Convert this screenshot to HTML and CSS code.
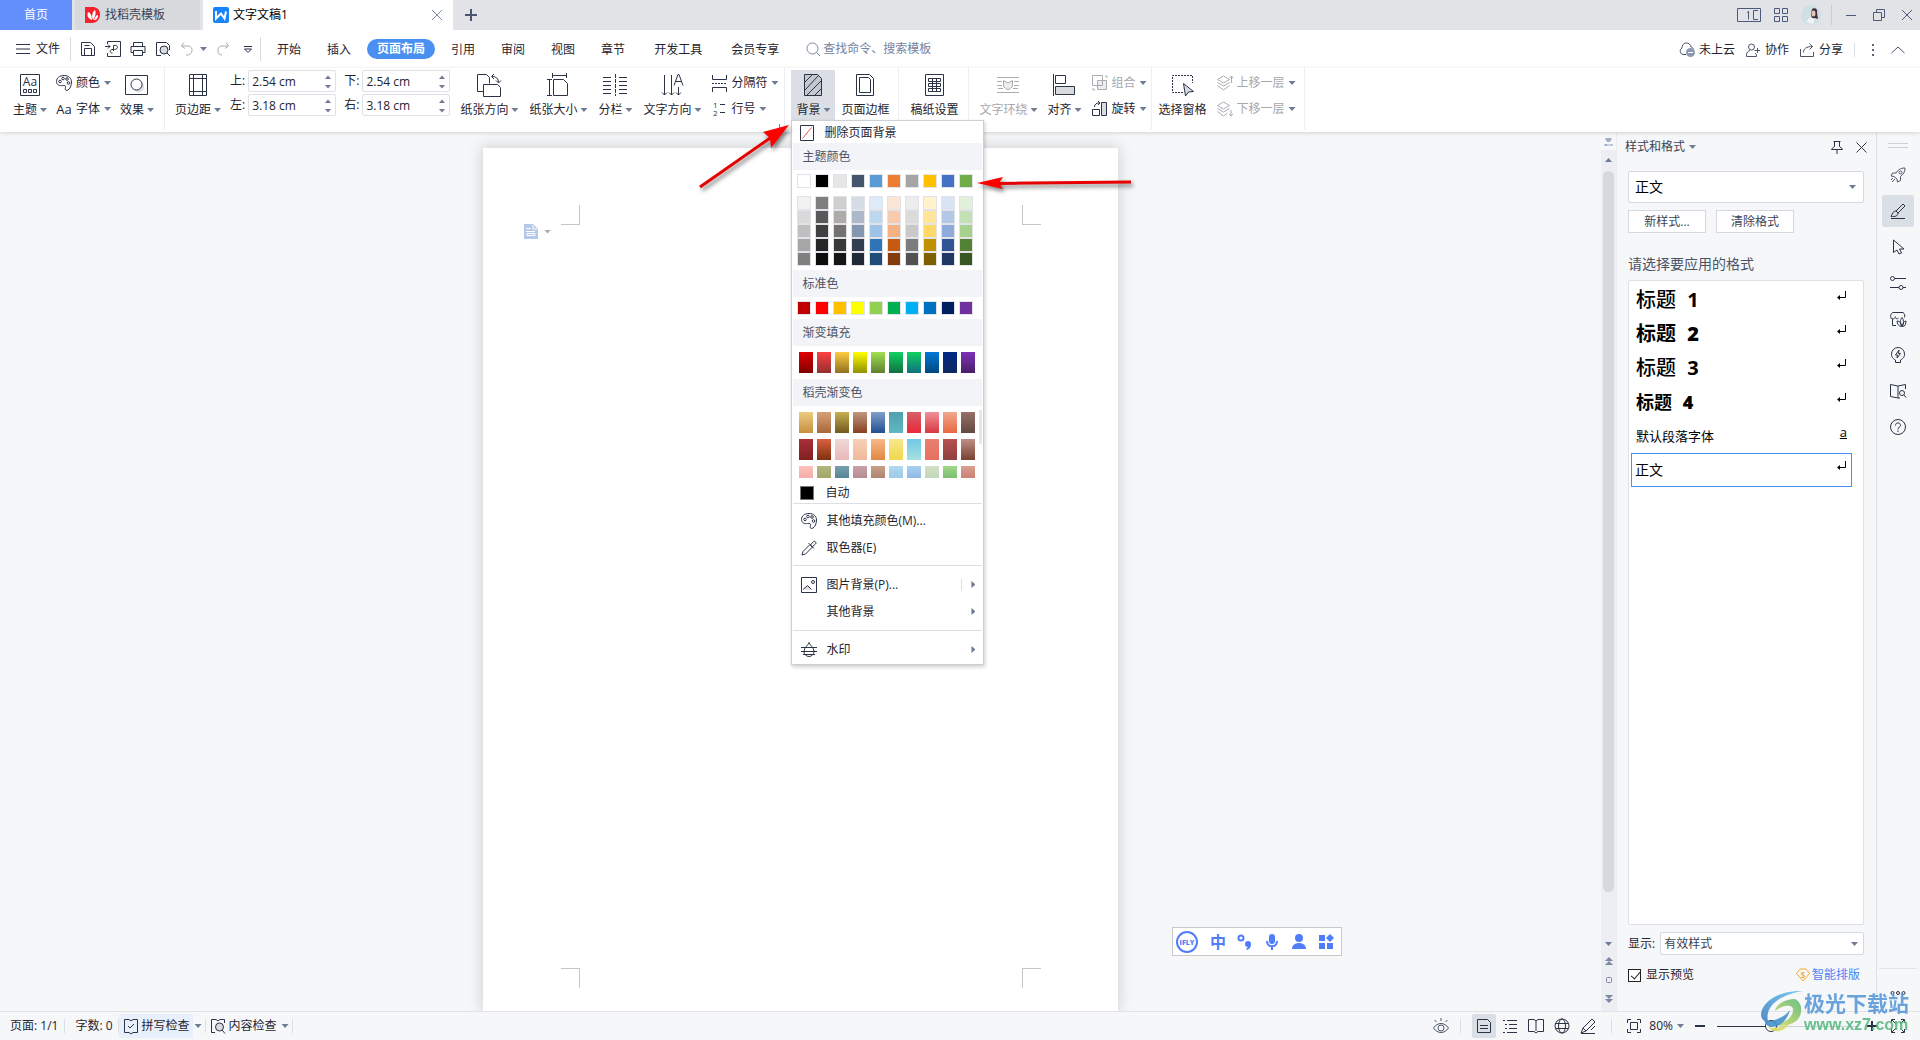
FILE: index.html
```html
<!DOCTYPE html>
<html lang="zh-CN">
<head>
<meta charset="utf-8">
<title>文字文稿1</title>
<link rel="stylesheet" href="styles.css">
</head>
<body>
<header class="titlebar">
  <button class="doc-tab doc-tab--home">首页</button>
  <button class="doc-tab doc-tab--store">
    <svg width="16" height="16" viewBox="0 0 16 16"><path d="M0 0h9a7 7 0 0 1 6 8 8 8 0 0 1-8 8H0z" fill="#f5222d"/><path d="M7 13C2 11 2 8 3 5c3 1 4 4 4 8zM8 13c-2-4 0-9 2-10 1 2 1 6-2 10zM9 13c1-3 2-5 4-5 0 3-1 5-4 5z" fill="#fff"/></svg>
    找稻壳模板</button>
  <div class="doc-tab doc-tab--current">
    <svg width="16" height="16" viewBox="0 0 16 16"><rect width="16" height="16" rx="2" fill="#1684fc"/><path d="M3 4v7.500L8 6.500l3.500 5L13 4.500" fill="none" stroke="#fff" stroke-width="2"/></svg>
    <span>文字文稿1</span>
    <button class="icon-btn doc-tab__close" aria-label="关闭标签"><svg width="12" height="12" viewBox="0 0 12 12"><path d="M1 1l10 10M11 1L1 11" stroke="#7c88a3" fill="none"/></svg></button>
  </div>
  <button class="icon-btn new-tab" aria-label="新建"><svg width="12" height="12" viewBox="0 0 12 12"><path d="M6 0v12M0 6h12" stroke="#4a5570" stroke-width="2"/></svg></button>
  <div class="window-tools">
    <button class="icon-btn" aria-label="窗口"><svg width="24" height="14" viewBox="0 0 24 14" class="ln ln--blue"><path d="M.5.500h23v13H.5zM21 2.500h-4.500v9H21M10 4.500l1.500-1v8"/></svg></button>
    <button class="icon-btn" aria-label="应用"><svg width="14" height="14" viewBox="0 0 14 14" class="ln ln--blue"><path d="M.5.500h5v5h-5zM8.500.500h5v5h-5zM.5 8.500h5v5h-5zM8.500 8.500h5v5h-5z"/></svg></button>
    <button class="icon-btn" aria-label="账户"><svg width="20" height="20" viewBox="0 0 20 20"><circle cx="10" cy="10" r="10" fill="#cfdfe4"/><path d="M11 4c3-2 6 0 5 4l1 6-3-1-3 1-1-5z" fill="#3b2f38"/><ellipse cx="12.500" cy="8.500" rx="2" ry="3" fill="#e9c4b6"/><path d="M5 17l4-5 5 2-2 5z" fill="#eef4f6"/></svg></button>
    <span class="vline vline--tall"></span>
    <button class="icon-btn" aria-label="最小化"><svg width="12" height="12" viewBox="0 0 12 12" class="ln ln--blue"><path d="M1 6.500h10"/></svg></button>
    <button class="icon-btn" aria-label="还原"><svg width="12" height="12" viewBox="0 0 12 12" class="ln ln--blue"><path d="M.5 3.500h8v8h-8zM3.500 3V.500h8v8H9"/></svg></button>
    <button class="icon-btn" aria-label="关闭"><svg width="12" height="12" viewBox="0 0 12 12" class="ln ln--blue"><path d="M1 1l10 10M11 1L1 11"/></svg></button>
  </div>
</header>

<nav class="menubar">
  <button class="file-btn"><svg width="14" height="10" viewBox="0 0 14 10" class="ln"><path d="M0 .500h14M0 5h14M0 9.500h14"/></svg>文件</button>
  <div class="quick">
    <button class="icon-btn" aria-label="保存"><svg width="16" height="16" viewBox="0 0 16 16" class="ln"><path d="M1.500 1.500h9l4 4v9h-13v-13zM4.500 14V7.500h7V14M4.500 4.500h5"/></svg></button>
    <button class="icon-btn" aria-label="输出为PDF"><svg width="16" height="16" viewBox="0 0 16 16" class="ln"><path d="M2.500 3V.500h13v15h-13V12M0 5.500h5M3 3.500l2 2-2 2M8.500 10V4.500c4-1.500 6 3.500 1 4H7c-3 .5-2 4 .5 3.500"/></svg></button>
    <button class="icon-btn" aria-label="打印"><svg width="16" height="16" viewBox="0 0 16 16" class="ln"><path d="M3.500 5.500v-4h9v4M3.500 11.500h-2.500v-6h14v6h-2.500M3.500 9.500h9v5h-9z"/></svg></button>
    <button class="icon-btn" aria-label="打印预览"><svg width="16" height="16" viewBox="0 0 16 16" class="ln"><path d="M6 14.500H1.500v-13h10l3 3V9"/><circle cx="9" cy="9" r="4" fill="#d9dbe0"/><path d="M12 12l3 3"/></svg></button>
    <span class="pair"><button class="icon-btn" aria-label="撤销"><svg width="16" height="16" viewBox="0 0 16 16" class="ln ln--gray"><path d="M4 1.500L1.500 5 5 7.500M2 5h6a4 4 0 0 1 4 4.500 5 5 0 0 1-6 4.500"/></svg></button><i class="caret"></i></span>
    <button class="icon-btn" aria-label="恢复"><svg width="16" height="16" viewBox="0 0 16 16" class="ln ln--gray"><path d="M11 1.500L13.500 5 10 7.500M13 5H7a4 4 0 0 0-4 4.500 4 4 0 0 0 4 4.500"/></svg></button>
    <button class="icon-btn" aria-label="自定义"><svg width="16" height="16" viewBox="0 0 16 16" class="ln"><path d="M4 5.500h8M4.500 8l3.500 3.500L11.500 8z"/></svg></button>
  </div>
  <div class="tabs">
    <button class="tab">开始</button><button class="tab">插入</button><button class="tab tab--active">页面布局</button><button class="tab">引用</button><button class="tab">审阅</button><button class="tab">视图</button><button class="tab">章节</button><button class="tab tab--spaced">开发工具</button><button class="tab tab--spaced">会员专享</button>
  </div>
  <label class="search"><svg width="15" height="15" viewBox="0 0 15 15" class="ln ln--soft"><circle cx="6.500" cy="6.500" r="5.500"/><path d="M10.500 10.500l3.500 3.500"/></svg><input type="text" placeholder="查找命令、搜索模板" aria-label="查找命令"></label>
  <div class="share">
    <button class="share__btn"><svg width="16" height="16" viewBox="0 0 16 16" class="ln ln--mid"><path d="M7 12.500H4A3.500 3.500 0 0 1 3 6a4.500 4.500 0 0 1 9-1c1 0 2 1 2.500 2"/><circle cx="11.500" cy="10.500" r="4.500" fill="#8d99b3" stroke="none"/><path d="M9 10.500h5" stroke="#fff"/></svg>未上云</button>
    <button class="share__btn share__btn--wide"><svg width="14" height="14" viewBox="0 0 14 14" class="ln ln--mid"><circle cx="5.500" cy="4" r="3"/><path d="M4 7.500C2 8 .500 9.500.500 12v1.500h10V12L9 10M8.500 7.500H14M11.500 5v5"/></svg>协作</button>
    <button class="share__btn share__btn--wide"><svg width="14" height="14" viewBox="0 0 14 14" class="ln ln--mid"><path d="M.500 6v7.500h13V9M3.500 9.500c0-4 3-6 9-6M9.500.500l3 3-3 3"/></svg>分享</button>
    <span class="vline"></span>
    <button class="icon-btn" aria-label="更多"><svg width="4" height="14" viewBox="0 0 4 14" fill="#5d6575"><path d="M1 1h2v2H1zM1 6h2v2H1zM1 11h2v2H1z"/></svg></button>
    <button class="icon-btn" aria-label="折叠功能区"><svg width="14" height="14" viewBox="0 0 14 14" class="ln ln--mid"><path d="M.500 10L7 4l6.500 6"/></svg></button>
  </div>
</nav>

<section class="ribbon">
  <div class="group group--theme">
    <button class="big"><span class="big__icon"><svg width="20" height="22" viewBox="0 0 20 22" class="ln"><path d="M.500.500h19v21H.500zM3.500 15.500h3v3h-3zM8.500 15.500h3v3h-3zM13.500 15.500h3v3h-3z"/><text x="10" y="12" text-anchor="middle" class="aa">Aa</text></svg></span><span class="lbl">主题<i class="caret"></i></span></button>
    <div class="stack">
      <button class="small"><svg width="16" height="16" viewBox="0 0 16 16" class="ln"><path d="M8 .500c5 0 7.500 3 7.500 6.500S14 14 12 15c-3 1.500-3-1-2.500-2.500.5-2-1-2.500-3-2-3 .500-6-.500-6-4C.500 3 3.500.500 8 .500z"/><circle cx="4" cy="6.500" r="1.300"/><circle cx="7" cy="3.500" r="1.300"/><circle cx="11" cy="4" r="1.300"/><circle cx="12.500" cy="8" r="1.300"/></svg>颜色<i class="caret"></i></button>
      <button class="small"><span class="aa-label">Aa</span>字体<i class="caret"></i></button>
    </div>
    <button class="big"><span class="big__icon"><svg width="23" height="20" viewBox="0 0 23 20" class="ln"><path d="M.500.500h22v19H.500z"/><circle cx="13.500" cy="11.500" r="5.500" fill="#d9dbe0" stroke="none"/><circle cx="11.500" cy="9.500" r="5.500" fill="#fff"/></svg></span><span class="lbl">效果<i class="caret"></i></span></button>
  </div>
  <div class="group group--margins">
    <button class="big"><span class="big__icon"><svg width="18" height="22" viewBox="0 0 18 22" class="ln"><path d="M.500.500h17v21H.500zM4.500 0v22M13.500 0v22M0 4.500h18M0 17.500h18"/></svg></span><span class="lbl">页边距<i class="caret"></i></span></button>
    <div class="fields">
      <label class="field">上:<span class="spin"><input type="text" value="2.54 cm"><svg width="6" height="14" viewBox="0 0 6 14"><path d="M0 4l3-3.500L6 4zM0 10l3 3.500L6 10z" fill="#6f7b95"/></svg></span></label>
      <label class="field">下:<span class="spin"><input type="text" value="2.54 cm"><svg width="6" height="14" viewBox="0 0 6 14"><path d="M0 4l3-3.500L6 4zM0 10l3 3.500L6 10z" fill="#6f7b95"/></svg></span></label>
      <label class="field">左:<span class="spin"><input type="text" value="3.18 cm"><svg width="6" height="14" viewBox="0 0 6 14"><path d="M0 4l3-3.500L6 4zM0 10l3 3.500L6 10z" fill="#6f7b95"/></svg></span></label>
      <label class="field">右:<span class="spin"><input type="text" value="3.18 cm"><svg width="6" height="14" viewBox="0 0 6 14"><path d="M0 4l3-3.500L6 4zM0 10l3 3.500L6 10z" fill="#6f7b95"/></svg></span></label>
    </div>
  </div>
  <div class="group group--paper">
    <button class="big"><span class="big__icon"><svg width="26" height="24" viewBox="0 0 26 24" class="ln"><path d="M8 18.500H1.500v-17h9l3 3v6M7.500 11.500h14l3 3v9h-17zM16 3.500c4 0 6.500 2 6.500 6M18 1l-2.500 2.500L18 6M20 7.500l2.500 2.500L25 7.500"/></svg></span><span class="lbl">纸张方向<i class="caret"></i></span></button>
    <button class="big"><span class="big__icon"><svg width="22" height="24" viewBox="0 0 22 24" class="ln"><path d="M5 2.500h15M5.500 0v5M19.500 0v5M2.500 6v17M0 6.500h5M0 22.500h5M6.500 6.500h10l4 4v12h-14z"/></svg></span><span class="lbl">纸张大小<i class="caret"></i></span></button>
    <button class="big"><span class="big__icon"><svg width="24" height="24" viewBox="0 0 24 24" class="ln"><path d="M0 4.500h8M0 8.500h8M0 12.500h8M0 16.500h8M0 20.500h8M16 4.500h8M16 8.500h8M16 12.500h8M16 16.500h8M16 20.500h8"/><path d="M12.500 1v22" stroke-dasharray="4 1"/></svg></span><span class="lbl">分栏<i class="caret"></i></span></button>
    <button class="big"><span class="big__icon"><svg width="22" height="24" viewBox="0 0 22 24" class="ln"><path d="M3.500 2v20M1 19.500L3.500 22 6 19.500M10.500 2v20M8 19.500l2.500 2.500 2.500-2.500M17.500 14v8M15 19.500l2.500 2.500 2.500-2.500M13 12.500l4-11h1l4 11M14.500 8.500h6"/></svg></span><span class="lbl">文字方向<i class="caret"></i></span></button>
    <div class="stack">
      <button class="small"><svg width="15" height="17" viewBox="0 0 15 17" class="ln"><path d="M.500 0v4.500h14V0M.500 17v-4.500h14V17"/><path d="M0 8.500h15" stroke-dasharray="2 1"/></svg>分隔符<i class="caret"></i></button>
      <button class="small"><svg width="15" height="18" viewBox="0 0 15 18" class="ln"><text x="1" y="8" class="num">1</text><text x="1" y="16" class="num">2</text><path d="M8 4.500h5M8 12.500h5"/></svg>行号<i class="caret"></i></button>
    </div>
    <svg class="launcher ln ln--soft" width="6" height="6" viewBox="0 0 6 6"><path d="M5.500 0v5.500H0"/></svg>
  </div>
  <div class="group group--page">
    <div class="anchor">
      <button class="big big--pressed"><span class="big__icon"><svg width="18" height="22" viewBox="0 0 18 22" class="ln"><path d="M.500.500h13l4 4v17H.500z" fill="#c3c8d1"/><path d="M1 8l7-7M1 16L14.500 1.500M3 21L17 7M11 21l6-6"/></svg></span><span class="lbl">背景<i class="caret"></i></span></button>
      <div class="menu">
        <button class="menu__top"><svg width="14" height="16" viewBox="0 0 14 16" class="ln"><path d="M.500.500h13v15H.500z"/><path d="M2.500 13.500l9-11" stroke="#e0554c"/></svg>删除页面背景</button>
        <h3 class="menu__head">主题颜色</h3>
        <div class="swatches" data-set="theme"></div>
        <div class="swatches swatches--tints" data-set="tints"></div>
        <h3 class="menu__head">标准色</h3>
        <div class="swatches swatches--std" data-set="standard"></div>
        <h3 class="menu__head">渐变填充</h3>
        <div class="swatches swatches--grad" data-set="gradient"></div>
        <h3 class="menu__head">稻壳渐变色</h3>
        <div class="swatches swatches--grad swatches--docer" data-set="docer"></div>
        <button class="menu__auto"><span class="menu__black"></span>自动</button>
        <div class="menu__part">
          <button class="menu__item"><svg width="16" height="16" viewBox="0 0 16 16" class="ln"><path d="M8 .500c5 0 7.500 3 7.500 6.500S14 14 12 15c-3 1.500-3-1-2.500-2.500.5-2-1-2.500-3-2-3 .500-6-.500-6-4C.500 3 3.500.500 8 .500z"/><circle cx="4" cy="6.500" r="1.300"/><circle cx="7" cy="3.500" r="1.300"/><circle cx="11" cy="4" r="1.300"/><circle cx="12.500" cy="8" r="1.300"/></svg>其他填充颜色(M)...</button>
          <button class="menu__item"><svg width="16" height="16" viewBox="0 0 16 16" class="ln"><path d="M9 4.500L2 11.500 1 15l3.500-1 7-7M7.500 3l5.500 5.500M9.500 5l3-3.500c1-1 3.500 1 2 2.500L11 7z"/></svg>取色器(E)</button>
        </div>
        <div class="menu__part">
          <button class="menu__item"><svg width="16" height="16" viewBox="0 0 16 16" class="ln"><path d="M.500.500h15v15H.500z"/><path d="M2 12.500l4.500-4 4 4z" fill="#d9dbe0" stroke="none"/><path d="M2 12.500l4.500-4 4 4"/><circle cx="12" cy="5" r="1.500"/></svg>图片背景(P)...<span class="menu__split"></span><i class="arrow"></i></button>
          <button class="menu__item"><svg width="16" height="16" viewBox="0 0 16 16"></svg>其他背景<i class="arrow menu__push"></i></button>
        </div>
        <div class="menu__part menu__part--last">
          <button class="menu__item"><svg width="16" height="16" viewBox="0 0 16 16" class="ln"><path d="M8 .500c1 3 5 5 5 9a5 5 0 0 1-10 0c0-4 4-6 5-9zM0 5.500h16M0 9.500h16M2 12.500h12"/></svg>水印<i class="arrow menu__push"></i></button>
        </div>
      </div>
      <svg class="pointer pointer--button" width="100" height="74" viewBox="0 0 100 74"><path d="M3 66L76 15" stroke="#e60000" stroke-width="3"/><path d="M92 4L66 11l7 6 1 10z" fill="#f00"/></svg>
      <svg class="pointer pointer--swatch" width="162" height="24" viewBox="0 0 162 24"><path d="M20 12.500L156 11" stroke="#e60000" stroke-width="3"/><path d="M2 12L28 6l-4 6 4 6z" fill="#f00"/></svg>
    </div>
    <button class="big"><span class="big__icon"><svg width="18" height="22" viewBox="0 0 18 22" class="ln"><path d="M.500.500h13l4 4v17H.500zM3.500 3.500h9l2 2v13h-11z"/></svg></span><span class="lbl">页面边框</span></button>
  </div>
  <div class="group">
    <button class="big"><span class="big__icon"><svg width="19" height="22" viewBox="0 0 19 22" class="ln"><path d="M.500.500h18v21H.500zM3.500 4.500h12v3h-12zM3.500 9.500h12v3h-12zM3.500 14.500h12v3h-12zM7.500 4.500v13M11.500 4.500v13"/></svg></span><span class="lbl">稿纸设置</span></button>
  </div>
  <div class="group group--arrange">
    <button class="big" disabled><span class="big__icon"><svg width="22" height="20" viewBox="0 0 22 20" class="ln ln--gray"><path d="M0 2.500h22M0 17.500h22M0 6.500h5M0 10.500h5M1 13.500h5M17 6.500h5M17 10.500h5M16 13.500h5"/><path d="M6.500 5.500L11 8l4.500-2.500v6L11 15l-4.500-3.500z" fill="#eee"/></svg></span><span class="lbl">文字环绕<i class="caret"></i></span></button>
    <button class="big"><span class="big__icon"><svg width="22" height="22" viewBox="0 0 22 22" class="ln"><path d="M.500 0v22M2.500 1.500h10v8h-10z"/><path d="M2.500 12.500h19v8h-19z" fill="#d9dbe0"/></svg></span><span class="lbl">对齐<i class="caret"></i></span></button>
    <div class="stack">
      <button class="small" disabled><svg width="16" height="16" viewBox="0 0 16 16" class="ln ln--gray"><path d="M.500.500h10v10H.500z"/><path d="M5.500 5.500h9v9h-9z" fill="#eee"/><path d="M10.500 5v5.500H5M1 15h2M1 13v2M13 1h2v2"/></svg>组合<i class="caret"></i></button>
      <button class="small"><svg width="16" height="16" viewBox="0 0 16 16" class="ln"><path d="M.500 8.500h7v6h-7zM2.500 6c0-3 2-4 5-4M6 0l2 2-2 2"/><path d="M9.500 1.500h5v13h-5z" fill="#d9dbe0"/></svg>旋转<i class="caret"></i></button>
    </div>
  </div>
  <div class="group group--select">
    <button class="big"><span class="big__icon"><svg width="24" height="24" viewBox="0 0 24 24" class="ln"><path d="M12 19.500H1.500v-17h20V10" stroke-dasharray="2 1"/><path d="M12.500 10.500l10 8-5 .500-3 4z" fill="#d9dbe0"/></svg></span><span class="lbl">选择窗格</span></button>
    <div class="stack">
      <button class="small" disabled><svg width="16" height="16" viewBox="0 0 16 16" class="ln ln--gray"><path d="M6.500 1l6 3.500-6 3.500-6-3.500z"/><path d="M.500 7.500l6 3.500 6-3.500M.500 10.500L6.500 15l6-4.500M14.500 8V1M12.500 3l2-2 1.500 2" /></svg>上移一层<i class="caret"></i></button>
      <button class="small" disabled><svg width="16" height="16" viewBox="0 0 16 16" class="ln ln--gray"><path d="M6.500 1l6 3.500-6 3.500-6-3.500z"/><path d="M.500 7.500l6 3.500 6-3.500M.500 10.500L6.500 15l4-3M14 9v6M12 13l2 2 2-2"/></svg>下移一层<i class="caret"></i></button>
    </div>
  </div>
</section>

<main class="work">
  <div class="canvas">
    <article class="page">
      <i class="mark mark--tl"></i><i class="mark mark--tr"></i><i class="mark mark--bl"></i><i class="mark mark--br"></i>
      <button class="page__tool" aria-label="粘贴选项"><svg width="14" height="15" viewBox="0 0 14 15"><path d="M0 0h9l5 5v10H0z" fill="#b3c8ea"/><path d="M2 4.500h5M2 7.500h9M3 9.500h8v2H3z" stroke="#fff" fill="none"/><path d="M9 1v4h4" stroke="#fff" fill="none"/></svg><i class="caret"></i></button>
    </article>
    <div class="ime">
      <svg width="24" height="24" viewBox="0 0 24 24"><circle cx="12" cy="12" r="10" fill="none" stroke="#507dfa" stroke-width="2"/><text x="12" y="15" text-anchor="middle" class="ifly">iFLY</text></svg>
      <span class="ime__zh">中</span>
      <svg width="16" height="16" viewBox="0 0 16 16"><circle cx="4" cy="4" r="2.500" fill="none" stroke="#507dfa" stroke-width="2"/><path d="M11 7a3 3 0 0 1 3 3c0 3-1 5-4 6l-1-1 2-2a3 3 0 0 1 0-6z" fill="#507dfa"/></svg>
      <svg width="16" height="16" viewBox="0 0 16 16" fill="#507dfa"><rect x="5" y="0" width="6" height="10" rx="3"/><path d="M3 7c0 7 10 7 10 0M8 12v4" fill="none" stroke="#507dfa" stroke-width="2"/></svg>
      <svg width="16" height="16" viewBox="0 0 16 16" fill="#507dfa"><circle cx="8" cy="4" r="4"/><path d="M1 15c0-8 14-8 14 0z"/></svg>
      <svg width="16" height="16" viewBox="0 0 16 16" fill="#507dfa"><path d="M1 1h6v6H1zM1 9h6v6H1zM9 9h6v6H9zM12 0l4 4-4 4-4-4z"/></svg>
    </div>
  </div>
  <div class="scroll">
    <svg class="scroll__ruler" width="14" height="18" viewBox="0 0 14 18" fill="#a3aec6"><path d="M4 6h6v2L8 10H6L4 8zM3 12h3v2H3zM7 12h1v2H7zM9 12h2v2H9z"/></svg>
    <i class="caret caret--up"></i>
    <span class="scroll__thumb"></span>
    <span class="scroll__nav"><i class="caret"></i>
    <svg width="8" height="8" viewBox="0 0 8 8" fill="#7c88a3"><path d="M0 4l4-4 4 4zM0 8l4-4 4 4z"/></svg>
    <svg width="8" height="8" viewBox="0 0 8 8"><rect x="1.500" y="1.500" width="5" height="5" rx="1" fill="none" stroke="#7c88a3"/></svg>
    <svg width="8" height="8" viewBox="0 0 8 8" fill="#7c88a3"><path d="M0 0l4 4 4-4zM0 4l4 4 4-4z"/></svg></span>
  </div>
  <aside class="panel">
    <div class="panel__title">样式和格式<i class="caret"></i>
      <button class="icon-btn panel__pin" aria-label="固定"><svg width="14" height="14" viewBox="0 0 14 14" class="ln"><path d="M3.500 1.500h7M4.500 1.500v5l-3 2.500v.500h11V9l-3-2.500v-5M7 10v4"/></svg></button>
      <button class="icon-btn" aria-label="关闭窗格"><svg width="11" height="11" viewBox="0 0 11 11" class="ln"><path d="M.500.500l10 10M10.500.500l-10 10"/></svg></button>
    </div>
    <div class="combo combo--big"><select aria-label="当前样式"><option>正文</option></select><i class="caret"></i></div>
    <div class="panel__btns"><button>新样式...</button><button>清除格式</button></div>
    <h2 class="panel__label">请选择要应用的格式</h2>
    <ul class="styles">
      <li class="style style--h1"><span>标题 <b>1</b></span><svg width="11" height="10" viewBox="0 0 11 10"><path d="M4 4v5L1 6.500z"/><path d="M9.500 0v6.500H2" fill="none" stroke="#000"/></svg></li>
      <li class="style style--h2"><span>标题 <b>2</b></span><svg width="11" height="10" viewBox="0 0 11 10"><path d="M4 4v5L1 6.500z"/><path d="M9.500 0v6.500H2" fill="none" stroke="#000"/></svg></li>
      <li class="style style--h3"><span>标题 <b>3</b></span><svg width="11" height="10" viewBox="0 0 11 10"><path d="M4 4v5L1 6.500z"/><path d="M9.500 0v6.500H2" fill="none" stroke="#000"/></svg></li>
      <li class="style style--h4"><span>标题 <b>4</b></span><svg width="11" height="10" viewBox="0 0 11 10"><path d="M4 4v5L1 6.500z"/><path d="M9.500 0v6.500H2" fill="none" stroke="#000"/></svg></li>
      <li class="style style--font"><span>默认段落字体</span><u>a</u></li>
      <li class="style style--current"><span>正文</span><svg width="11" height="10" viewBox="0 0 11 10"><path d="M4 4v5L1 6.500z"/><path d="M9.500 0v6.500H2" fill="none" stroke="#000"/></svg></li>
    </ul>
    <div class="panel__show"><label for="show">显示:</label><div class="combo"><select id="show"><option>有效样式</option></select><i class="caret"></i></div></div>
    <div class="panel__check"><input type="checkbox" id="preview" checked><label for="preview">显示预览</label>
      <a href="#layout"><svg width="14" height="14" viewBox="0 0 14 14"><path d="M4 1h6l3.500 4.500L7 13 .500 5.500z" fill="none" stroke="#f5a623"/><text x="7" y="10" text-anchor="middle" class="coin">S</text></svg>智能排版</a></div>
  </aside>
  <nav class="rail">
    <span class="rail__grip"></span>
    <button aria-label="快捷"><svg width="16" height="16" viewBox="0 0 16 16" class="ln ln--mid"><path d="M15 1c-5 0-7 2-9 5H2.500L1 9l3 .500L7 12l.500 3 3-1.500v-4C13.500 7 15 5 15 1zM3 11l-2 2M5 12l-3 3"/><circle cx="10.500" cy="5.500" r="1.500"/></svg></button>
    <button class="on" aria-label="样式"><svg width="16" height="16" viewBox="0 0 16 16" class="ln"><path d="M6 8l7-7 2 2-7 7zM6 8c-3 0-3 2-5 5.500 4 .500 7-.500 7-3.500M1 15.500h14"/></svg></button>
    <button aria-label="选择"><svg width="16" height="16" viewBox="0 0 16 16" class="ln"><path d="M3.500 1v12.500L7 11l2 4 2.500-1-2-4H14z"/></svg></button>
    <button aria-label="属性"><svg width="16" height="16" viewBox="0 0 16 16" class="ln"><circle cx="2.500" cy="3.500" r="2"/><path d="M5 3.500h11M0 12.500h9M13 12.500h3"/><circle cx="11" cy="12.500" r="2"/></svg></button>
    <button aria-label="稻壳"><svg width="16" height="16" viewBox="0 0 16 16" class="ln"><path d="M6 14.500H2.500V8M1 7.500C.500 5 0 3 3 1.500h10c2 1.500 2 3 1.500 5M1 7c2 1.500 4 1 4.500-1.500M5.500 7c1 1 2 1 3 0"/><path d="M12 6.500c2 2 2 6 0 9-2-3-2-7 0-9zM7 10c3 0 4 2 4.500 5.500C9 15.500 7 13 7 10zM16 10c-2 0-3 2-3.500 5.500 2.500 0 3.500-2.500 3.500-5.500z"/></svg></button>
    <button aria-label="灵感"><svg width="16" height="16" viewBox="0 0 16 16" class="ln"><path d="M5.500 13C2 11 1.500 9.500 1.500 7a6.500 6.500 0 0 1 13 0c0 2.500-.500 4-4 6v2.500h-5zM9 3L5.500 8h2L7 11l3.500-4.500h-2z"/></svg></button>
    <button aria-label="查阅"><svg width="16" height="16" viewBox="0 0 16 16" class="ln"><path d="M8 3L.500 1.500v12L8 15V3l7.500-1.500V6M8 15h2"/><circle cx="12" cy="10" r="2.500"/><path d="M14 12l2 2.500"/></svg></button>
    <button aria-label="帮助"><svg width="16" height="16" viewBox="0 0 16 16" class="ln"><circle cx="8" cy="8" r="7.500"/><path d="M5.500 6.500c0-3.500 5-3.500 5 0C10.500 8 8 8 8 10.500M8 11.500V13"/></svg></button>
    <button class="rail__more" aria-label="更多工具"><svg width="16" height="6" viewBox="0 0 16 6" class="ln"><circle cx="2.500" cy="3" r="1.500"/><circle cx="8" cy="3" r="1.500"/><circle cx="13.500" cy="3" r="1.500"/></svg></button>
  </nav>
</main>

<footer class="status">
  <span class="status__text">页面: 1/1</span>
  <span class="vline"></span>
  <span class="status__text">字数: 0</span>
  <span class="vline"></span>
  <button class="status__btn status__btn--on"><svg width="16" height="16" viewBox="0 0 16 16" class="ln"><path d="M6 1.500H1.500v13H6L8 16l2-1.500h4.500v-13H10L8 3 6 1.500M5 8l2 2 4-4"/></svg>拼写检查</button><i class="caret"></i>
  <span class="vline"></span>
  <button class="status__btn"><svg width="16" height="16" viewBox="0 0 16 16" class="ln"><path d="M5 14.500H1.500v-13H6L8 3l2-1.500h4.500V5"/><circle cx="9.500" cy="9" r="4" fill="#d9dbe0"/><path d="M12 12l3 3.500"/></svg>内容检查</button><i class="caret"></i>
  <span class="vline"></span>
  <div class="views">
    <button class="icon-btn views__eye" aria-label="护眼模式"><svg width="16" height="16" viewBox="0 0 16 16" class="ln ln--mid"><path d="M.500 10c4-6 11-6 15 0-4 6-11 6-15 0zM8 0v3M1.500 2l2 2M14.500 2l-2 2"/><circle cx="8" cy="10" r="3"/></svg></button>
    <span class="vline"></span>
    <button class="view view--on" aria-label="页面视图"><svg width="16" height="16" viewBox="0 0 16 16" class="ln"><path d="M1.500 1.500h10l3 3v10h-13zM4 7.500h8M4 10.500h8"/></svg></button>
    <button class="view" aria-label="大纲"><svg width="16" height="16" viewBox="0 0 16 16" class="ln"><path d="M1 2.500h2M5 2.500h10M3 6.500h2M7 6.500h8M3 10.500h2M7 10.500h8M1 14.500h2M5 14.500h10"/></svg></button>
    <button class="view" aria-label="阅读"><svg width="16" height="16" viewBox="0 0 16 16" class="ln"><path d="M6 1.500H.500v12H6L8 15l2-1.500h5.500v-12H10L8 3 6 1.500M8 3v10"/></svg></button>
    <button class="view" aria-label="网页"><svg width="16" height="16" viewBox="0 0 16 16" class="ln"><circle cx="8" cy="8" r="7"/><ellipse cx="8" cy="8" rx="3.500" ry="7"/><path d="M1.500 5.500h13M1.500 10.500h13"/></svg></button>
    <button class="view" aria-label="写作"><svg width="16" height="16" viewBox="0 0 16 16" class="ln"><path d="M1 15l2-5 9-9 3 3-9 9zM3 10l3 3M1 15.500h14M11 12l4-4"/></svg></button>
    <span class="vline"></span>
  </div>
  <div class="zoom">
    <button class="icon-btn" aria-label="适合页面"><svg width="14" height="14" viewBox="0 0 14 14" class="ln"><path d="M.500 4V.500H4M10 .500h3.500V4M13.500 10v3.500H10M4 13.500H.500V10M3.500 3.500h7v7h-7z"/></svg></button>
    <button class="zoom__value">80%<i class="caret"></i></button>
    <button class="icon-btn zoom__minus" aria-label="缩小"><svg width="10" height="10" viewBox="0 0 10 10"><path d="M0 5h10" stroke="#2b3346" stroke-width="2"/></svg></button>
    <input type="range" min="0" max="100" value="37" aria-label="缩放">
    <button class="icon-btn" aria-label="放大"><svg width="10" height="10" viewBox="0 0 10 10"><path d="M0 5h10M5 0v10" stroke="#2b3346" stroke-width="2"/></svg></button>
    <button class="icon-btn zoom__full" aria-label="全屏"><svg width="14" height="14" viewBox="0 0 14 14" class="ln"><path d="M.500 4V.500H4M10 .500h3.500V4M13.500 10v3.500H10M4 13.500H.500V10M1 1l4 4M13 1L9 5M13 13L9 9M1 13l4-4"/></svg></button>
  </div>
</footer>

<div class="site">
  <svg width="42" height="42" viewBox="0 0 42 42"><defs><linearGradient id="b" x1="1" y1="0" x2="0" y2="1"><stop offset="0" stop-color="#6cc4ec"/><stop offset="1" stop-color="#3b7fc4"/></linearGradient><linearGradient id="g" x1="0" y1="1" x2="1" y2="0"><stop offset="0" stop-color="#d8dc5a"/><stop offset="1" stop-color="#58b878"/></linearGradient></defs><path d="M42 1C22 0 2 9 0 24c0 5 3 8 7 7C4 16 18 5 42 1z" fill="url(#b)"/><path d="M34 9C24 9 15 14 14 21c9-7 19-7 18 0-1 7-8 12-19 14 14 3 26-3 27-13 1-7-2-11-6-13z" fill="url(#g)"/><path d="M3 30c7 3 20-2 26-10-3 11-11 18-20 17-3-1-5-4-6-7z" fill="#3e8fc8"/><path d="M7 37c8 2 16 0 21-3-5 8-15 10-21 3z" fill="#d8dc5a"/></svg>
  <div><strong>极光下载站</strong><em>www.xz7.com</em></div>
</div>
<script src="swatches.js"></script>
</body>
</html>
```

FILE: styles.css
```css
* { box-sizing: border-box; }
:root { --ink: #2b3346; --text: #1f2430; --soft: #7c88a3; --line: #e1e3e8; --bg: #f6f7f9; }
body {
  margin: 0; height: 100vh; display: flex; flex-direction: column; overflow: hidden;
  background: var(--bg); color: var(--text);
  font: 12px/16px "Open Sans", "Noto Sans CJK SC", sans-serif;
}
button, input, select { font: inherit; color: inherit; }
button { padding: 0; border: 0; background: none; white-space: nowrap; }
button:disabled { color: #a6a8ad; }
svg { display: block; flex: none; overflow: visible; }
.ln { fill: none; stroke: var(--ink); }
.ln text { stroke: none; fill: var(--ink); }
.ln--blue { stroke: #4c5a7a; }
.ln--mid { stroke: #4d5668; }
.ln--gray { stroke: #a9abb0; }
.ln--soft { stroke: var(--soft); }
.aa { font-size: 12px; }
.num { font-size: 8px; }
.icon-btn { display: flex; align-items: center; justify-content: center; }
.caret { flex: none; width: 7px; height: 4px; margin-right: -1px; background: #6f7b95; clip-path: polygon(0 0, 100% 0, 50% 100%); }
.caret--up { clip-path: polygon(50% 0, 100% 100%, 0 100%); }
.arrow { width: 4px; height: 7px; background: #6f7b95; clip-path: polygon(0 0, 100% 50%, 0 100%); }
.vline { width: 1px; height: 14px; background: #dcdfe5; }
.vline--tall { height: 20px; margin-left: -3px; background: #c9ccd4; }

.titlebar { display: flex; align-items: stretch; height: 30px; background: #e1e3e7; }
.doc-tab { display: flex; align-items: center; gap: 4px; padding: 0 10px; }
.doc-tab--home { width: 72px; justify-content: center; background: #628ffb; color: #fff; }
.doc-tab--store { width: 125px; margin: 0 3px; background: #d8d9dc; color: #3c4354; }
.doc-tab--current { width: 250px; background: #fff; color: #000; }
.doc-tab__close { margin-left: auto; }
.new-tab { width: 36px; }
.window-tools { display: flex; align-items: center; gap: 13px; margin-left: auto; padding-right: 7px; }
.window-tools .icon-btn:nth-last-child(-n+2) { margin-left: 3px; }

.menubar { display: flex; align-items: center; height: 38px; background: #fff; }
.file-btn { display: flex; align-items: center; gap: 6px; height: 24px; padding: 0 10px 0 16px; border-right: 1px solid #d9dce3; }
.quick { display: flex; align-items: center; gap: 9px; height: 24px; padding: 0 4px 0 9px; border-right: 1px solid #d9dce3; }
.pair { display: flex; align-items: center; gap: 4px; }
.tabs { display: flex; align-items: center; padding-left: 3px; }
.tab { height: 20px; padding: 2px 13px 0; }
.tab--active { margin: 0 3px; padding: 0 10px; border-radius: 10px; background: #4a90f2; color: #fff; font-weight: 700; }
.tab--spaced { margin-left: 3px; }
.search { display: flex; align-items: center; gap: 2px; margin-left: 14px; }
.search input { width: 120px; padding: 0; border: 0; background: none; outline: 0; }
.search input::placeholder { color: #7681a0; opacity: 1; }
.share { display: flex; align-items: center; margin-left: auto; padding: 2px 15px 0 0; gap: 11px; }
.share__btn { display: flex; align-items: center; gap: 4px; }
.share__btn--wide { gap: 5px; }
.share .icon-btn { margin-left: 5px; }

.ribbon { position: relative; z-index: 2; display: flex; height: 64px; padding-bottom: 2px; background: #fff; box-shadow: 0 1px 4px rgba(0, 0, 0, .15); }
.group { position: relative; display: flex; align-items: flex-start; padding: 2px 9px 0 11px; gap: 10px; border-right: 1px solid #eceef1; }
.group--theme { padding-left: 13px; padding-right: 11px; }
.group--margins { padding-left: 10px; padding-right: 10px; border-right: 0; }
.group--paper { padding-left: 0; padding-right: 7px; gap: 12px; }
.group--page { padding-left: 6px; gap: 6px; }
.group--arrange { padding-right: 5px; gap: 11px; }
.group--select { padding-left: 7px; }
.launcher { position: absolute; right: 4px; bottom: 0; }
.big { display: flex; flex-direction: column; align-items: center; gap: 4px; height: 50px; padding-top: 2px; }
.big--pressed { padding-left: 5px; padding-right: 6px; background: #dbdfe5; }
.big__icon { display: flex; align-items: center; height: 26px; }
.lbl { display: flex; align-items: center; gap: 3px; }
.stack { display: flex; flex-direction: column; gap: 6px; padding-top: 3px; }
.small { display: flex; align-items: center; gap: 4px; height: 20px; }
.aa-label { width: 16px; font-size: 13px; }
.fields { display: grid; grid-template-columns: auto auto; gap: 2px 8px; }
.field { display: flex; align-items: center; gap: 3px; }
.spin { display: flex; align-items: center; width: 88px; height: 22px; padding: 1px 4px 0 3px; border: 1px solid #dfe1e6; border-radius: 2px; background: #fff; }
.spin input { flex: 1; min-width: 0; padding: 0; border: 0; outline: 0; background: none; }

.anchor { position: relative; }
.menu { position: absolute; z-index: 3; left: 0; top: 50px; width: 193px; padding: 1px; border: 1px solid #cdcfd4; background: #fff; box-shadow: 1px 2px 4px rgba(0, 0, 0, .2); }
.menu button { display: flex; align-items: center; }
.menu__top { gap: 10px; width: 100%; height: 21px; padding-left: 7px; }
.menu__head { margin: 0; height: 27px; padding: 0 9px; background: #f3f4f7; color: #4b5366; font: inherit; line-height: 27px; }
.swatches { display: grid; grid-template-columns: repeat(10, 14px); column-gap: 4px; padding: 4px 4px 8px; }
.swatches--tints { padding-top: 0; padding-bottom: 4px; }
.swatches--std { padding-bottom: 4px; }
.swatches--grad { padding: 6px 6px; }
.swatches--docer { position: relative; row-gap: 6px; height: 72px; padding-bottom: 0; overflow: hidden; }
.swatches--docer::after { content: ""; position: absolute; right: 0; top: 4px; width: 3px; height: 34px; background: #e6e7ea; }
.swatch { height: 14px; border: 1px solid #e1e3e8; }
.swatches--grad .swatch { height: 21px; border: 0; }
.menu__auto { gap: 11px; width: 100%; height: 20px; margin-top: 5px; padding: 0 0 0 7px; }
.menu__black { width: 14px; height: 14px; border: 1px solid #777; background: #000; }
.menu__part { padding: 3px 0 4px; border-top: 1px solid #dcdee3; }
.menu__part + .menu__part { padding: 5px 0; }
.menu__part + .menu__part--last { padding: 5px 0 0; }
.menu__item { gap: 9px; width: 100%; height: 27px; padding: 0 7px 0 8px; }
.menu__push { margin-left: auto; }
.menu__split { width: 1px; height: 12px; margin-left: auto; background: #dcdee3; }
.pointer { position: absolute; z-index: 4; fill: none; filter: drop-shadow(2px 3px 2px rgba(0, 0, 0, .5)); }
.pointer--button { left: -94px; top: 51px; }
.pointer--swatch { left: 184px; top: 101px; }

.work { flex: 1; min-height: 0; display: flex; }
.canvas { position: relative; flex: 1; display: flex; justify-content: center; padding-top: 16px; overflow: hidden; }
.page { position: relative; width: 635px; background: #fff; box-shadow: 0 0 14px 2px rgba(0, 0, 0, .14); }
.mark { position: absolute; width: 19px; height: 20px; border: 0 solid #c6c6c6; }
.mark--tl { left: 78px; top: 57px; border-width: 0 1px 1px 0; }
.mark--tr { right: 77px; top: 57px; border-width: 0 0 1px 1px; }
.mark--bl { left: 78px; bottom: 23px; border-width: 1px 1px 0 0; }
.mark--br { right: 77px; bottom: 23px; border-width: 1px 0 0 1px; }
.page__tool { position: absolute; left: 41px; top: 76px; display: flex; align-items: center; gap: 6px; }
.page__tool .caret { background: #a9abb0; }
.ime { position: absolute; right: 259px; bottom: 55px; display: flex; align-items: center; gap: 11px; height: 29px; padding: 0 7px 0 2px; border: 1px solid #c9c9c9; background: #fff; }
.ime__zh { color: #507dfa; font-size: 16px; font-weight: 700; }
.ifly { fill: #507dfa; font-size: 7px; font-weight: 800; }

.scroll { display: flex; flex-direction: column; align-items: center; width: 15px; background: #eceef3; }
.scroll .caret { margin-right: 0; }
.scroll__ruler { width: 15px; margin-bottom: 8px; background: var(--bg); }
.scroll__thumb { flex: 1; width: 11px; margin: 9px 0 50px; border-radius: 6px; background: #d5d8df; }
.scroll__nav { display: flex; flex-direction: column; align-items: center; gap: 11px; padding-bottom: 8px; }

.panel { display: flex; flex-direction: column; width: 260px; padding: 0 12px 26px 11px; border-left: 1px solid #e9ebf0; }
.panel__title { display: flex; align-items: center; gap: 4px; height: 30px; margin: 0 -3px; color: #3c4354; }
.panel__pin { margin-left: auto; margin-right: 8px; }
.combo { position: relative; flex: 1; }
.combo select { width: 100%; height: 23px; padding: 0 3px; border: 1px solid #d5d8df; border-radius: 2px; background: #fff; appearance: none; color: #3c4354; }
.combo .caret { position: absolute; right: 7px; top: 10px; }
.combo--big { flex: none; margin-top: 9px; }
.combo--big select { height: 32px; padding: 0 6px; font-size: 14px; color: #000; }
.combo--big .caret { right: 9px; top: 14px; }
.panel__btns { display: flex; gap: 10px; margin-top: 7px; }
.panel__btns button { width: 78px; height: 23px; border: 1px solid #d5d8df; background: #fff; color: #3c4354; }
.panel__label { margin: 21px 0 6px; font: 14px/20px "Open Sans", "Noto Sans CJK SC", sans-serif; color: #4b5366; }
.styles { flex: 1; margin: 0; padding: 2px 11px 2px 2px; list-style: none; border: 1px solid #dfe1e6; border-radius: 2px; background: #fff; color: #000; }
.style { display: flex; align-items: center; justify-content: space-between; height: 34px; padding: 0 4px; border: 1px solid transparent; }
.style svg, .style u { margin-bottom: 8px; }
.style b { margin-left: 6px; }
.style--h1, .style--h2, .style--h3 { font-size: 20px; font-weight: 500; }
.style--h2, .style--h4 { font-weight: 700; }
.style--h4 { font-size: 18px; }
.style--font { font-size: 13px; }
.style--current { padding-left: 3px; border-color: #4a90f2; font-size: 14px; }
.panel__show { display: flex; align-items: center; gap: 5px; margin-top: 7px; }
.panel__check { display: flex; align-items: center; gap: 5px; height: 20px; margin-top: 10px; }
.panel__check input { appearance: none; width: 13px; height: 13px; margin: 0; border: 1px solid #222; background: #fff; position: relative; }
.panel__check input:checked::after { content: ""; position: absolute; left: 4px; top: 0; width: 4px; height: 8px; border: solid #222; border-width: 0 1px 1px 0; transform: rotate(40deg); }
.panel__check a { display: flex; align-items: center; gap: 2px; margin-left: auto; margin-right: 4px; color: #4a82f5; text-decoration: none; }
.coin { fill: #f5a623; font-size: 8px; font-weight: 700; }

.rail { display: flex; flex-direction: column; align-items: center; gap: 4px; width: 44px; padding: 11px 1px 0 0; border-left: 1px solid #dfe1e6; }
.rail__grip { width: 20px; height: 5px; margin-bottom: 7px; border: solid #cdd0d6; border-width: 1px 0; }
.rail button { display: flex; align-items: center; justify-content: center; width: 32px; height: 32px; border-radius: 2px; }
.rail .on { background: #dadee5; }
.rail .rail__more { width: 38px; height: 43px; margin-top: auto; padding-top: 6px; border-top: 1px solid #e1e3e8; border-radius: 0; }

.status { display: flex; align-items: center; height: 29px; padding-left: 10px; border-top: 1px solid var(--line); white-space: nowrap; }
.status__text { padding-right: 6px; }
.status .vline + .status__text { padding: 0 5px 0 10px; }
.status__btn { display: flex; align-items: center; gap: 3px; height: 24px; padding: 0 3px 0 4px; }
.status__btn--on { background: #e8f0fc; }
.status > .caret { margin: 0 3px 0 2px; }
.views { display: flex; align-items: center; gap: 2px; margin-left: auto; }
.views .vline { margin: 0 9px; }
.view { display: flex; align-items: center; justify-content: center; width: 24px; height: 24px; border-radius: 2px; }
.view--on { background: #dadee5; }
.zoom { display: flex; align-items: center; gap: 8px; padding: 0 15px 0 6px; }
.zoom__value { display: flex; align-items: center; gap: 4px; }
.zoom__minus { margin: 0 4px; }
.zoom__full { margin-left: 6px; }
.zoom input { appearance: none; width: 142px; height: 12px; margin: 0; background: linear-gradient(#2b3346, #2b3346) left center / 37% 1px no-repeat, linear-gradient(#cdd1d9, #cdd1d9) center / 100% 1px no-repeat; }
.zoom input::-webkit-slider-thumb { appearance: none; width: 12px; height: 12px; border: 1px solid var(--ink); border-radius: 50%; background: #fff; }

.site { position: fixed; z-index: 5; right: 11px; bottom: 6px; display: flex; gap: 1px; pointer-events: none; opacity: .88; }
.site strong, .site em { display: block; font-style: normal; font-weight: 700; }
.site strong { color: #5797d8; font-size: 21px; line-height: 26px; }
.site em { color: #55b87c; font: 700 16px/18px "Liberation Sans", sans-serif; }
```

FILE: swatches.js
```js
const palettes = {
  theme: "#fff #000 #e7e6e6 #44546a #5b9bd5 #ed7d31 #a5a5a5 #ffc000 #4472c4 #70ad47",
  tints:
    "#f2f2f2 #7f7f7f #d0cece #d6dce5 #deebf7 #fbe5d6 #ededed #fff2cc #dae3f3 #e2f0d9 " +
    "#d9d9d9 #595959 #afabab #adb9ca #bdd7ee #f8cbad #dbdbdb #ffe699 #b4c7e7 #c5e0b4 " +
    "#bfbfbf #404040 #767171 #8497b0 #9dc3e6 #f4b183 #c9c9c9 #ffd966 #8faadc #a9d18e " +
    "#a6a6a6 #262626 #3b3838 #333f50 #2e75b6 #c55a11 #7c7c7c #bf9000 #2f5597 #548235 " +
    "#7f7f7f #0d0d0d #181717 #222a35 #1f4e79 #843c0c #525252 #7f6000 #203864 #385723",
  standard: "#c00000 #ff0000 #ffc000 #ffff00 #92d050 #00b050 #00b0f0 #0070c0 #002060 #7030a0",
  gradient:
    "#e00000/#800000 #ff4040/#903030 #ffcc40/#907020 #ffff00/#909000 #a0e050/#608030 " +
    "#10d060/#107040 #10d060/#107080 #0078d8/#004880 #002888/#102860 #8030b8/#482068",
  docer:
    "#ecca80/#c89040 #d8a078/#a86838 #c8b050/#705820 #c09880/#884020 #80a0c8/#205090 " +
    "#50a0b0/#60b8c0 #d86068/#e82838 #f09098/#d83840 #f0a890/#e86840 #987068/#604840 " +
    "#a83038/#802020 #d86040/#803010 #f0d8d8/#e8b8b8 #f8d0b8/#f0b898 #f8b888/#e08840 " +
    "#f8e890/#f0d848 #70c8e8/#a8e0e0 #e88070/#e87060 #b85050/#904040 #c09088/#784030 " +
    "#ffc0b8/#e8a0a0 #b0b880/#989858 #78a0b0/#407080 #c8a0a8/#a88080 #c8a088/#987060 " +
    "#b0d8f0/#90c0e0 #a8d0f0/#80a8e0 #d0e0c8/#b8d0b0 #a0d888/#60a860 #d8a090/#c86860"
};

for (const box of document.querySelectorAll("[data-set]")) {
  for (const color of palettes[box.dataset.set].split(" ")) {
    const [top, bottom] = color.split("/");
    const swatch = document.createElement("button");
    swatch.className = "swatch";
    swatch.setAttribute("aria-label", color);
    swatch.style.background = bottom ? `linear-gradient(${top}, ${bottom})` : top;
    box.append(swatch);
  }
}
```
